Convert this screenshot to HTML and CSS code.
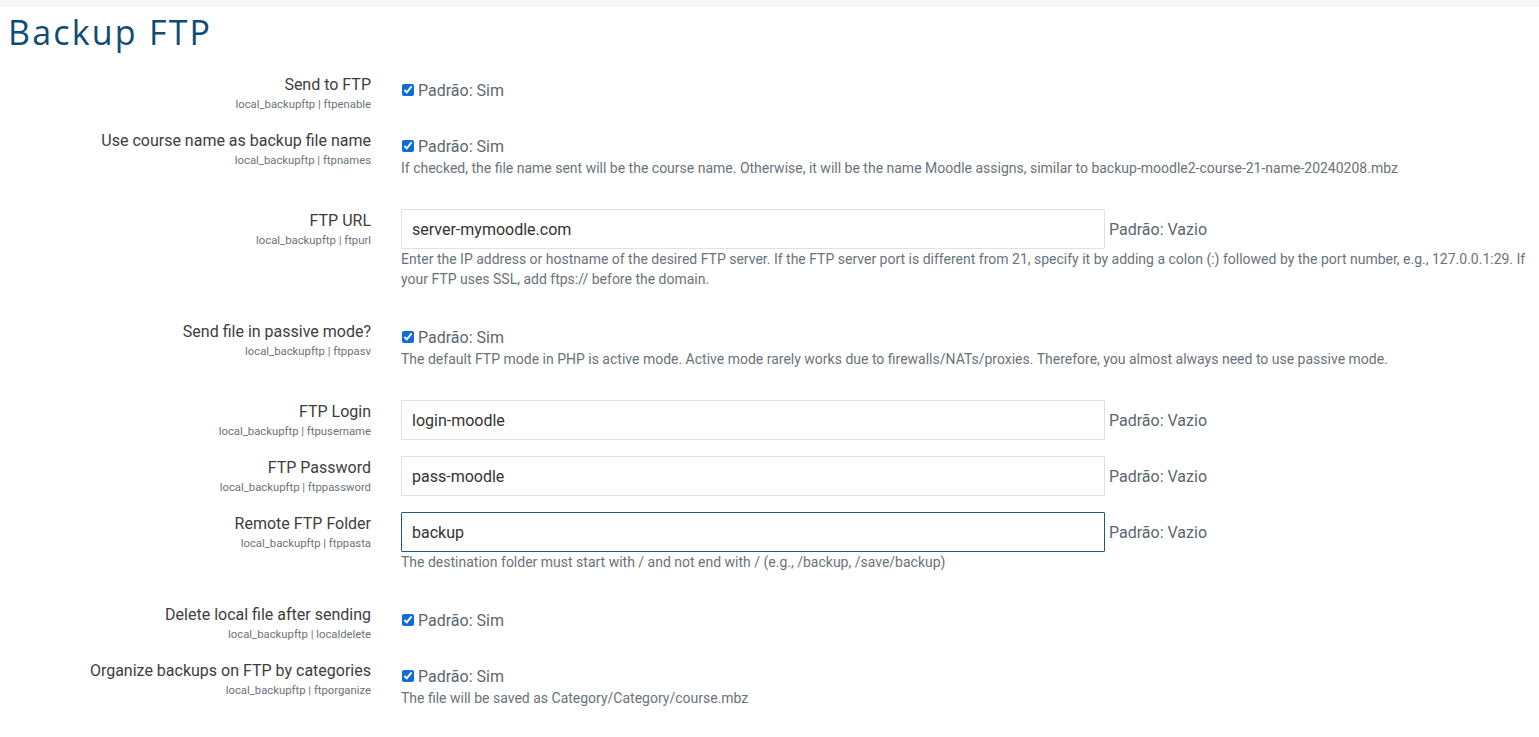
FILE: index.html
```html
<!DOCTYPE html>
<html lang="pt-BR">
<head>
    <meta charset="UTF-8">
    <title>Backup FTP</title>
    <link rel="stylesheet" href="styles.css">
</head>
<body>
    <div class="top-strip"></div>
    <div class="page">
        <h2 class="page-title">Backup FTP</h2>

        <div class="settings">
            <div class="setting">
                <div class="setting-label">
                    <label>Send to FTP</label>
                    <span class="setting-key">local_backupftp | ftpenable</span>
                </div>
                <div class="setting-body check-body">
                    <div class="check-line">
                        <input type="checkbox" checked>
                        <span class="default-note">Padrão: Sim</span>
                    </div>
                </div>
            </div>

            <div class="setting">
                <div class="setting-label">
                    <label>Use course name as backup file name</label>
                    <span class="setting-key">local_backupftp | ftpnames</span>
                </div>
                <div class="setting-body check-body">
                    <div class="check-line">
                        <input type="checkbox" checked>
                        <span class="default-note">Padrão: Sim</span>
                    </div>
                    <p class="setting-desc">If checked, the file name sent will be the course name. Otherwise, it will be the name Moodle assigns, similar to backup-moodle2-course-21-name-20240208.mbz</p>
                </div>
            </div>

            <div class="setting">
                <div class="setting-label">
                    <label>FTP URL</label>
                    <span class="setting-key">local_backupftp | ftpurl</span>
                </div>
                <div class="setting-body">
                    <div class="text-line">
                        <input type="text" class="text-input" value="server-mymoodle.com">
                        <span class="default-note">Padrão: Vazio</span>
                    </div>
                    <p class="setting-desc">Enter the IP address or hostname of the desired FTP server. If the FTP server port is different from 21, specify it by adding a colon (:) followed by the port number, e.g., 127.0.0.1:29. If your FTP uses SSL, add ftps:// before the domain.</p>
                </div>
            </div>

            <div class="setting">
                <div class="setting-label">
                    <label>Send file in passive mode?</label>
                    <span class="setting-key">local_backupftp | ftppasv</span>
                </div>
                <div class="setting-body check-body">
                    <div class="check-line">
                        <input type="checkbox" checked>
                        <span class="default-note">Padrão: Sim</span>
                    </div>
                    <p class="setting-desc">The default FTP mode in PHP is active mode. Active mode rarely works due to firewalls/NATs/proxies. Therefore, you almost always need to use passive mode.</p>
                </div>
            </div>

            <div class="setting">
                <div class="setting-label">
                    <label>FTP Login</label>
                    <span class="setting-key">local_backupftp | ftpusername</span>
                </div>
                <div class="setting-body">
                    <div class="text-line">
                        <input type="text" class="text-input" value="login-moodle">
                        <span class="default-note">Padrão: Vazio</span>
                    </div>
                </div>
            </div>

            <div class="setting">
                <div class="setting-label">
                    <label>FTP Password</label>
                    <span class="setting-key">local_backupftp | ftppassword</span>
                </div>
                <div class="setting-body">
                    <div class="text-line">
                        <input type="text" class="text-input" value="pass-moodle">
                        <span class="default-note">Padrão: Vazio</span>
                    </div>
                </div>
            </div>

            <div class="setting">
                <div class="setting-label">
                    <label>Remote FTP Folder</label>
                    <span class="setting-key">local_backupftp | ftppasta</span>
                </div>
                <div class="setting-body">
                    <div class="text-line">
                        <input type="text" class="text-input focused" value="backup">
                        <span class="default-note">Padrão: Vazio</span>
                    </div>
                    <p class="setting-desc">The destination folder must start with / and not end with / (e.g., /backup, /save/backup)</p>
                </div>
            </div>

            <div class="setting">
                <div class="setting-label">
                    <label>Delete local file after sending</label>
                    <span class="setting-key">local_backupftp | localdelete</span>
                </div>
                <div class="setting-body check-body">
                    <div class="check-line">
                        <input type="checkbox" checked>
                        <span class="default-note">Padrão: Sim</span>
                    </div>
                </div>
            </div>

            <div class="setting">
                <div class="setting-label">
                    <label>Organize backups on FTP by categories</label>
                    <span class="setting-key">local_backupftp | ftporganize</span>
                </div>
                <div class="setting-body check-body">
                    <div class="check-line">
                        <input type="checkbox" checked>
                        <span class="default-note">Padrão: Sim</span>
                    </div>
                    <p class="setting-desc">The file will be saved as Category/Category/course.mbz</p>
                </div>
            </div>
        </div>
    </div>
</body>
</html>
```

FILE: styles.css
```css
body {
    margin: 0;
    background: #fff;
    font-family: Roboto, "Liberation Sans", sans-serif;
    color: #333;
}
.top-strip {
    height: 5px;
    background: #f8f8f8;
    border-bottom: 1px solid #f2f2f2;
}
.page {
    padding: 0 8px;
}
.page-title {
    margin: 6px 0 21px;
    font-family: "Open Sans", sans-serif;
    font-weight: 400;
    font-size: 34px;
    line-height: 40px;
    color: #0f4c75;
    letter-spacing: 2.2px;
}
.setting {
    display: flex;
    gap: 30px;
    margin-bottom: 16px;
}
.setting-label {
    width: 363px;
    flex-shrink: 0;
    text-align: right;
    display: flex;
    flex-direction: column;
}
.setting-label label {
    font-size: 16px;
    line-height: 24px;
    color: #3d3d3d;
}
.setting-key {
    font-size: 11.3px;
    line-height: 16px;
    color: #6a737b;
}
.setting-body {
    flex: 1;
    min-width: 0;
}
.check-body {
    padding-top: 5px;
}
.check-line {
    display: flex;
    align-items: center;
    height: 24px;
}
.check-line input {
    margin: 0 4px 0 1px;
    width: 12px;
    height: 12px;
    accent-color: #0f6cd8;
}
.default-note {
    font-size: 16px;
    color: #5c6670;
}
.text-line {
    display: flex;
    align-items: center;
    gap: 4px;
}
.text-input {
    width: 704px;
    height: 40px;
    box-sizing: border-box;
    border: 1px solid #dee2e6;
    border-radius: 1px;
    padding: 0 10px;
    font-family: Roboto, sans-serif;
    font-size: 16px;
    color: #333;
    outline: none;
}
.text-input.focused {
    border-color: #1d5b7d;
}
.setting-desc {
    margin: 0 0 15px;
    font-size: 14px;
    line-height: 20px;
    color: #6a737b;
}
```
